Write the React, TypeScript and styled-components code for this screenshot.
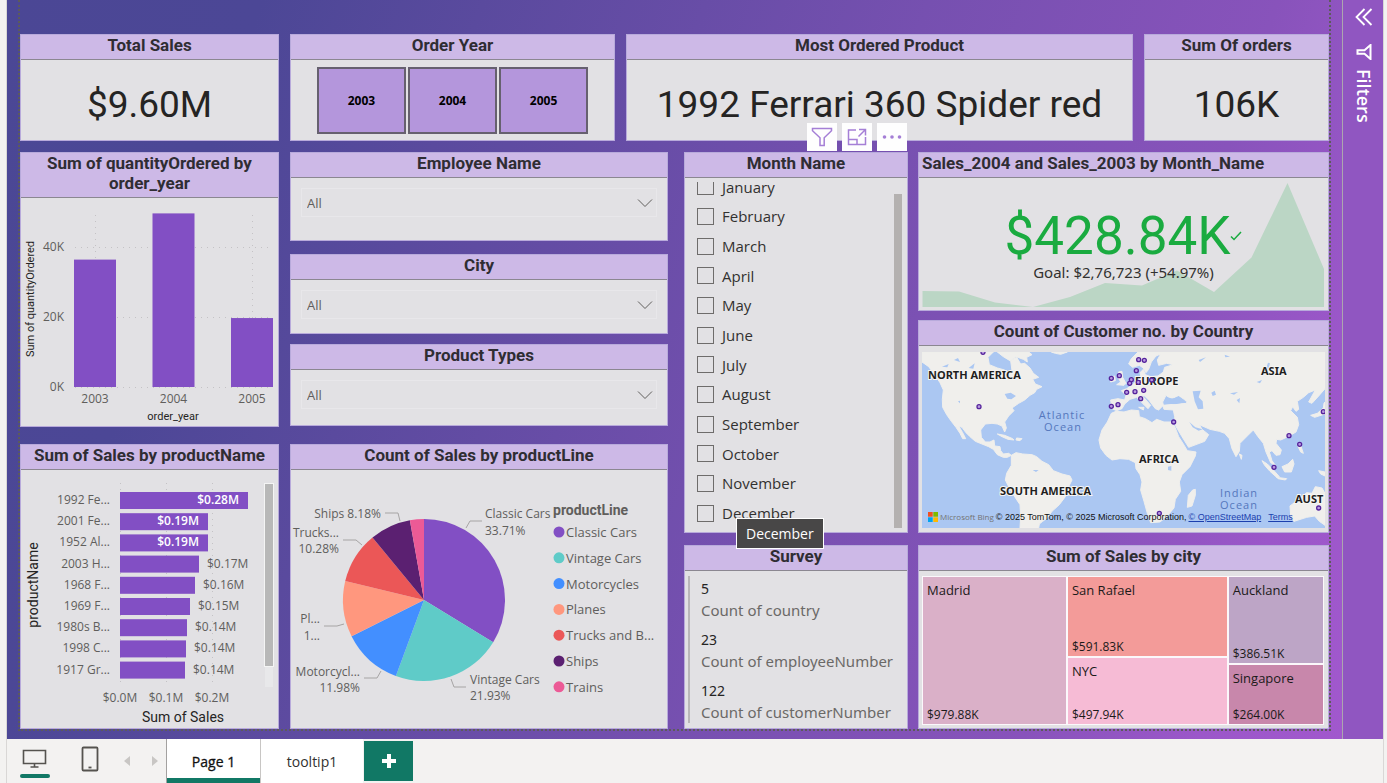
import React from "react";
import styled, { createGlobalStyle } from "styled-components";

const din = `Roboto, "Liberation Sans", sans-serif`;
const segoe = `"Open Sans", "Noto Sans", sans-serif`;
const wide = `"Noto Sans", "Open Sans", sans-serif`;

const GlobalStyle = createGlobalStyle`
  *, *::before, *::after { box-sizing: border-box; }
  body { margin: 0; background: #f3f2f1; font-family: ${segoe}; color: #252423; }
  button, select, input { font: inherit; }
`;

/* ---------- shell ---------- */

const Shell = styled.div`
  min-height: 100vh;
  display: flex;
  flex-direction: column;
  padding: 0 3px 0 6px;
`;

const Workspace = styled.div`
  flex: 1;
  display: flex;
  border-left: 1px solid #d9d7d6;
  border-right: 1px solid #d9d7d6;
`;

const Canvas = styled.main`
  flex: 1;
  min-width: 0;
  padding: 0 11px 8px;
  background: linear-gradient(109deg, #4b4795 0%, #4c4796 16%, #5a4a9e 30%, #7650b0 58%, #8853bb 80%, #9b57c9 91%, #a158cd 100%);
`;

const ReportFrame = styled.div`
  display: flex;
  flex-direction: column;
  gap: 11px;
  height: 100%;
  padding-top: 34px;
  border: 2px dotted #5d5b5a;
  border-top: 0;
`;

const TopRow = styled.div`
  display: grid;
  grid-template-columns: 259fr 325fr 507fr 185fr;
  gap: 11px;
`;

const Board = styled.div`
  flex: 1;
  display: grid;
  grid-template-columns: 648fr 645fr;
  gap: 16px;
`;

const Half = styled.div<{ $columns: string; $gap: number }>`
  display: grid;
  grid-template-columns: ${(p) => p.$columns};
  gap: ${(p) => p.$gap}px;
  min-width: 0;
`;

const Stack = styled.div<{ $gap: number }>`
  display: flex;
  flex-direction: column;
  gap: ${(p) => p.$gap}px;
  min-width: 0;
`;

/* ---------- cards ---------- */

const Card = styled.section<{ $grow?: boolean }>`
  position: relative;
  display: flex;
  flex-direction: column;
  flex-grow: ${(p) => (p.$grow ? 1 : 0)};
  min-width: 0;
  border: 1px solid #b8aadb;
  background: #e2e1e4;
`;

const CardTitle = styled.h2<{ $align?: string }>`
  margin: 0;
  padding: 0 3px 4px;
  border-bottom: 1px solid #8b8791;
  background: #cdb9e7;
  color: #2f2d33;
  font: 700 17px/20px ${din};
  text-align: ${(p) => p.$align ?? "center"};
`;

const CardBody = styled.div<{ $height: number }>`
  position: relative;
  min-height: ${(p) => p.$height}px;
  flex: 1;
  display: flex;
  align-items: center;
  justify-content: center;
`;

const Chart = styled.svg`
  display: block;
  width: 100%;
  font-family: ${segoe};
`;

const BigNumber = styled.p`
  margin: 0;
  padding-top: 10px;
  color: #252423;
  font: 400 37px/40px ${din};
  white-space: nowrap;
`;

/* ---------- year tiles ---------- */

const YearTiles = styled.div`
  width: 84%;
  height: 67px;
  display: grid;
  grid-template-columns: repeat(3, 1fr);
  gap: 2px;
`;

const YearTile = styled.button`
  border: 2px solid #66606f;
  background: #b496dc;
  color: #000;
  font-size: 12px;
  font-weight: 700;
  padding: 0;
`;

/* ---------- drop-down slicers ---------- */

const Dropdown = styled.div`
  position: relative;
  width: calc(100% - 20px);
`;

const DropdownSelect = styled.select`
  display: block;
  width: 100%;
  height: 29px;
  padding: 0 5px;
  appearance: none;
  border: 1px solid #e8e7ea;
  border-radius: 0;
  background: transparent;
  color: #605e5c;
  font-size: 13px;
`;

const DropdownArrow = styled.svg`
  position: absolute;
  right: 4px;
  top: 10px;
  pointer-events: none;
`;

const SlicerBody = styled(CardBody)`
  align-items: flex-start;
  padding-top: 10px;
`;

function SlicerCard({ id, title, height }: { id: string; title: string; height: number }) {
  return (
    <Card>
      <CardTitle>
        <label htmlFor={id}>{title}</label>
      </CardTitle>
      <SlicerBody $height={height}>
        <Dropdown>
          <DropdownSelect id={id} defaultValue="All">
            <option>All</option>
          </DropdownSelect>
          <DropdownArrow width="16" height="10" viewBox="0 0 16 10" fill="none" stroke="#605e5c">
            <path d="M1 1.5 8 8.5 15 1.5" />
          </DropdownArrow>
        </Dropdown>
      </SlicerBody>
    </Card>
  );
}

/* ---------- month list ---------- */

const MonthScroller = styled.div`
  flex: 1;
  align-self: stretch;
  display: flex;
  margin: 4px 5px 4px 12px;
`;

const MonthClip = styled.div`
  flex: 1;
  height: 346px;
  display: flex;
  flex-direction: column;
  justify-content: flex-end;
  overflow: hidden;
`;

const MonthList = styled.ul`
  flex: none;
  height: 356px;
  display: grid;
  grid-auto-rows: 1fr;
  align-items: center;
  margin: 0;
  padding: 0;
  list-style: none;
`;

const MonthLabel = styled.label`
  display: flex;
  align-items: center;
  gap: 8px;
  color: #323130;
  font-size: 15px;
  line-height: 20px;
`;

const MonthBox = styled.input`
  appearance: none;
  width: 17px;
  height: 17px;
  margin: 0;
  border: 1px solid #6e6c6b;
  background: transparent;
`;

const MonthScrollbar = styled.div`
  width: 8px;
  margin-top: 12px;
  background: #b4b1b0;
`;

const Tooltip = styled.div`
  position: absolute;
  z-index: 3;
  left: 51px;
  bottom: -17px;
  padding: 4px 9px;
  border: 1px solid #fff;
  background: #484747;
  color: #fff;
  font-size: 14px;
  line-height: 21px;
`;

const HeaderTools = styled.div`
  position: absolute;
  z-index: 2;
  right: 0;
  bottom: calc(100% + 2px);
  display: flex;
  gap: 5px;
`;

const ToolButton = styled.button`
  width: 30px;
  height: 28px;
  display: grid;
  place-items: center;
  padding: 0;
  border: 0;
  background: #fefefe;
`;

/* ---------- survey ---------- */

const SurveyList = styled.dl`
  flex: 1;
  align-self: stretch;
  display: flex;
  flex-direction: column;
  gap: 8px;
  margin: 5px 4px 5px 3px;
  padding: 2px 0 0 11px;
  border-left: 2px solid #b9b7b9;
  font-family: ${wide};
  font-size: 15px;
  line-height: 22px;
  white-space: nowrap;
`;

const SurveyItem = styled.div`
  display: flex;
  flex-direction: column-reverse;
`;

const SurveyName = styled.dt`
  color: #6b6967;
`;

const SurveyValue = styled.dd`
  margin: 0;
  color: #252423;
  font-size: 14px;
  line-height: 21px;
`;

/* ---------- KPI ---------- */

const KpiTrend = styled.svg`
  position: absolute;
  inset: 0;
  width: 100%;
  height: 100%;
`;

const KpiText = styled.div`
  position: relative;
  text-align: center;
  padding-top: 4px;
`;

const KpiValue = styled.p`
  display: flex;
  align-items: center;
  justify-content: center;
  margin: 0;
  color: #1aab40;
  font: 400 53px/52px ${din};
`;

const KpiGoal = styled.p`
  margin: 0;
  color: #323130;
  font-family: ${wide};
  font-size: 15px;
  line-height: 20px;
`;

/* ---------- map ---------- */

const MapFrame = styled.div`
  position: relative;
  width: 100%;
  margin: 6px 3px 4px;
  overflow: hidden;
`;

const MapCredit = styled.div`
  position: absolute;
  left: 6px;
  right: 4px;
  bottom: 4px;
  display: flex;
  align-items: center;
  gap: 2px;
  color: #111;
  font: 400 9px/14px "Liberation Sans", sans-serif;
  white-space: nowrap;
`;

const BingName = styled.span`
  color: #737373;
  font-family: ${segoe};
  font-size: 8px;
`;

const MapLink = styled.a`
  color: #1b3fae;
  margin-right: 5px;
`;

/* ---------- treemap ---------- */

const Treemap = styled.div`
  flex: 1;
  align-self: stretch;
  display: grid;
  grid-template-columns: 144fr 160fr 95fr;
  gap: 2px;
  margin: 5px 4px 3px 3px;
  padding: 1px;
  background: #fbf8fb;
`;

const TreemapColumn = styled.div<{ $rows: string }>`
  display: grid;
  grid-template-rows: ${(p) => p.$rows};
  gap: 2px;
`;

const Tile = styled.div<{ $color: string }>`
  display: flex;
  flex-direction: column;
  justify-content: space-between;
  padding: 4px 4px 0;
  background: ${(p) => p.$color};
  color: #1b1a19;
  font-size: 13px;
  line-height: 18px;
`;

const TileValue = styled.span`
  font-size: 12px;
`;

/* ---------- filters pane ---------- */

const FiltersPane = styled.aside`
  flex: none;
  width: 41px;
  display: flex;
  flex-direction: column;
  align-items: center;
  gap: 18px;
  padding: 8px 0 0 2px;
  border-left: 1px solid #aca6ae;
  background: #9056c1;
`;

const PaneButton = styled.button`
  display: grid;
  padding: 0;
  border: 0;
  background: none;
  color: #fff;
`;

const PaneTitle = styled.h2`
  display: flex;
  align-items: center;
  gap: 9px;
  margin: 0;
  color: #fff;
  font-size: 18px;
  font-weight: 600;
  line-height: 20px;
  writing-mode: vertical-rl;
`;

/* ---------- page tabs ---------- */

const TabBar = styled.footer`
  display: flex;
  height: 44px;
  border-left: 1px solid #d9d7d6;
  border-right: 1px solid #d9d7d6;
`;

const DeviceButton = styled.button<{ $active?: boolean }>`
  width: 30px;
  height: 39px;
  margin: 0 0 0 ${(p) => (p.$active ? 13 : 25)}px;
  padding: 0;
  display: flex;
  flex-direction: column;
  align-items: center;
  justify-content: center;
  border: 0;
  background: none;
  position: relative;

  &::after {
    content: "";
    position: absolute;
    inset: auto 0 0;
    height: 4px;
    border-radius: 2px;
    background: ${(p) => (p.$active ? "#117865" : "transparent")};
  }
`;

const PageArrows = styled.div`
  display: flex;
  align-items: center;
  gap: 20px;
  margin: 0 7px 0 18px;
`;

const ArrowButton = styled.button`
  display: grid;
  padding: 0;
  border: 0;
  background: none;
`;

const Tab = styled.button<{ $active?: boolean; $width: number }>`
  width: ${(p) => p.$width}px;
  padding: 0;
  border: 0;
  border-left: 1px solid ${(p) => (p.$active ? "#a3a1a0" : "#c8c6c4")};
  box-shadow: inset 0 ${(p) => (p.$active ? -5 : 0)}px 0 #117865;
  background: #fff;
  color: ${(p) => (p.$active ? "#111" : "#323130")};
  font-size: 14px;
  -webkit-text-stroke: ${(p) => (p.$active ? "0.3px" : "0")};
`;

const AddPage = styled.button`
  display: grid;
  place-items: center;
  width: 49px;
  height: 40px;
  margin: 2px 0 0 1px;
  padding: 0;
  border: 0;
  background: #117865;
`;

/* ---------- column chart ---------- */

const quantityByYear = [
  { year: "2003", value: 36.4 },
  { year: "2004", value: 49.6 },
  { year: "2005", value: 19.7 },
];

function QuantityChart() {
  const base = 189;
  const perK = 3.5;
  return (
    <Chart height="228" viewBox="0 0 257 228" fontSize="12" fill="#605e5c">
      <g stroke="#c4c2c5" strokeDasharray="1 5">
        {[0, 20, 40].map((k) => (
          <line key={k} x1="54" x2="252" y1={base - k * perK + 0.5} y2={base - k * perK + 0.5} />
        ))}
        {[74.5, 231.5].map((x) => (
          <line key={x} x1={x} x2={x} y1="17" y2={base} />
        ))}
      </g>
      {[0, 20, 40].map((k) => (
        <text key={k} x="43" y={base - k * perK + 4} textAnchor="end">
          {k}K
        </text>
      ))}
      {quantityByYear.map((d, i) => {
        const cx = 74 + i * 78.5;
        return (
          <g key={d.year}>
            <rect x={cx - 21} y={base - d.value * perK} width="42" height={d.value * perK} fill="#824fc4" />
            <text x={cx} y="205" textAnchor="middle">
              {d.year}
            </text>
          </g>
        );
      })}
      <g fill="#252423" fontFamily={din} fontSize="11" textAnchor="middle">
        <text x="152" y="222">order_year</text>
        <text transform="translate(13 101) rotate(-90)">Sum of quantityOrdered</text>
      </g>
    </Chart>
  );
}

/* ---------- bar chart ---------- */

const salesByProduct = [
  { name: "1992 Fe...", width: 128, label: "$0.28M" },
  { name: "2001 Fe...", width: 88, label: "$0.19M" },
  { name: "1952 Al...", width: 88, label: "$0.19M" },
  { name: "2003 H...", width: 79, label: "$0.17M" },
  { name: "1968 F...", width: 75, label: "$0.16M" },
  { name: "1969 F...", width: 70, label: "$0.15M" },
  { name: "1980s B...", width: 67, label: "$0.14M" },
  { name: "1998 C...", width: 66, label: "$0.14M" },
  { name: "1917 Gr...", width: 65, label: "$0.14M" },
];

function ProductChart() {
  const left = 99;
  return (
    <Chart height="258" viewBox="0 0 257 258" fontSize="12" fill="#605e5c">
      <g stroke="#c4c2c5" strokeDasharray="1 5">
        {[0, 46, 92].map((x) => (
          <line key={x} x1={left + x + 0.5} x2={left + x + 0.5} y1="13" y2="217" />
        ))}
      </g>
      {salesByProduct.map((d, i) => {
        const cy = 30 + i * 21.2;
        const inside = i < 3;
        return (
          <g key={d.name}>
            <text x="89" y={cy + 4} textAnchor="end">
              {d.name}
            </text>
            <rect x={left} y={cy - 8} width={d.width} height="17" fill="#824fc4" />
            <text
              x={left + d.width + (inside ? -9 : 8)}
              y={cy + 4}
              textAnchor={inside ? "end" : "start"}
              fill={inside ? "#fff" : undefined}
              fontWeight={inside ? 600 : 400}
            >
              {d.label}
            </text>
          </g>
        );
      })}
      <g textAnchor="middle">
        {["$0.0M", "$0.1M", "$0.2M"].map((t, i) => (
          <text key={t} x={left + i * 46} y="232">
            {t}
          </text>
        ))}
      </g>
      <g fill="#252423" fontFamily={din} fontSize="14" textAnchor="middle">
        <text x="162" y="252">Sum of Sales</text>
        <text transform="translate(17 115) rotate(-90)">productName</text>
      </g>
      <rect x="244" y="13" width="8" height="204" fill="#e8e8ea" />
      <rect x="243.500" y="13.500" width="9" height="183" fill="#b8b8b8" stroke="#f4f4f4" />
    </Chart>
  );
}

/* ---------- pie chart ---------- */

const productLines = [
  { name: "Classic Cars", share: 33.71, color: "#824fc4" },
  { name: "Vintage Cars", share: 21.93, color: "#5fcbc8" },
  { name: "Motorcycles", share: 11.98, color: "#438fff" },
  { name: "Planes", share: 11.13, color: "#ff977e" },
  { name: "Trucks and B...", share: 10.28, color: "#eb5757" },
  { name: "Ships", share: 8.18, color: "#5b2071" },
  { name: "Trains", share: 2.79, color: "#ec5a96" },
];

function PieChart() {
  const cx = 133;
  const cy = 130;
  const r = 81;
  let total = 0;
  const point = (share: number) => {
    const a = (share / 100) * Math.PI * 2;
    return `${(cx + r * Math.sin(a)).toFixed(2)} ${(cy - r * Math.cos(a)).toFixed(2)}`;
  };
  return (
    <Chart height="258" viewBox="0 0 376 258" fontSize="12" fill="#605e5c">
      {productLines.map((d) => {
        const from = total;
        total += d.share;
        return <path key={d.name} d={`M${cx} ${cy}L${point(from)}A${r} ${r} 0 0 1 ${point(total)}Z`} fill={d.color} />;
      })}
      <g fill="none" stroke="#a6a4a4">
        <path d="M175 58l4-7h12" />
        <path d="M94 43h13l2 8" />
        <path d="M52 70h13l6 5" />
        <path d="M33 156h13l7-2" />
        <path d="M73 208h13l4-7" />
        <path d="M160 209l3 8h12" />
      </g>
      <text x="194" y="48">Classic Cars</text>
      <text x="194" y="65">33.71%</text>
      <text x="179" y="214">Vintage Cars</text>
      <text x="179" y="230">21.93%</text>
      <g textAnchor="end">
        <text x="90" y="48">Ships 8.18%</text>
        <text x="48" y="67">Trucks...</text>
        <text x="48" y="83">10.28%</text>
        <text x="29" y="153">Pl...</text>
        <text x="29" y="170">1...</text>
        <text x="69" y="206">Motorcycl...</text>
        <text x="69" y="222">11.98%</text>
      </g>
      <text x="262" y="45" fontFamily={din} fontSize="14" fontWeight="700">productLine</text>
      <g fontSize="13">
        {productLines.map((d, i) => (
          <g key={d.name}>
            <circle cx="268" cy={62 + i * 25.8} r="5.500" fill={d.color} />
            <text x="275" y={67 + i * 25.8}>{d.name}</text>
          </g>
        ))}
      </g>
    </Chart>
  );
}

/* ---------- map ---------- */

const land = [
  "M36 66L56 80 74 104 90 128 100 150 97 178 98 202 110 224 124 244 138 262 150 280 158 296 167 296 158 278 146 258 156 262 168 278 180 290 196 304 216 312 236 320 250 328 262 344 280 352 292 352 304 346 296 340 280 342 272 332 270 320 254 318 252 300 240 306 226 306 214 292 212 270 226 252 246 250 262 252 276 258 284 276 289 264 284 246 296 228 312 212 306 204 326 190 344 180 360 166 374 158 380 148 396 140 376 132 368 118 386 112 370 100 360 84 344 70 332 72 320 52 302 62 306 92 292 108 284 90 262 84 238 74 234 52 250 36H36Z",
  "M262 36L280 50 300 62 318 50 340 58 352 66 350 52 366 44 356 36Z",
  "M262 282L284 286 308 296 312 300 294 298 276 290Z",
  "M320 294L336 296 330 302 318 300Z",
  "M424 36H472L452 43 436 40Z",
  "M304 346L318 338 338 342 366 344 380 350 396 364 416 374 430 392 456 402 480 408 486 420 474 444 466 470 448 494 426 514 412 534 398 544 388 552 386 564H330L332 530 330 494 314 470 298 444 286 420 290 400 304 376Z",
  "M604 220L618 214 642 216 664 210 686 212 688 230 706 236 726 248 740 238 762 246 786 246 796 264 806 290 820 312 832 332 858 336 856 348 840 380 816 404 808 426 812 454 796 478 792 504 770 530 750 546 722 548 712 520 702 484 692 450 696 426 690 404 678 386 676 368 656 358 630 356 606 360 588 346 572 324 567 300 576 270 592 246Z",
  "M832 502L835 466 848 450 856 448 856 466 846 498Z",
  "M606 206L602 180 624 176 644 180 648 166 634 152 650 146 666 136 680 122 694 116 690 98 700 88 706 104 722 110 744 108 760 96 764 82 790 74 770 70 746 76 742 60 752 42 738 48 724 66 716 88 708 98 700 84 688 76 668 82 656 72 664 56 684 36H1245V146L1226 168 1206 190 1196 186 1216 150 1196 158 1180 172 1162 184 1166 208 1158 214 1148 200 1142 212 1162 232 1166 254 1158 276 1134 290 1112 300 1100 298 1098 310 1114 330 1110 344 1098 346 1086 332 1078 336 1086 362 1096 376 1082 368 1068 336 1060 310 1044 290 1030 270 1014 286 990 310 988 334 978 350 966 326 958 296 944 280 928 274 900 268 868 254 876 268 896 284 884 304 836 322 816 290 796 256 794 230 790 210 762 208 758 196 800 192 832 190 822 178 806 168 782 176 768 166 758 186 760 196 746 210 736 206 718 182 704 168 694 164 722 196 714 206 700 192 680 172 660 178 644 192 636 206 620 212Z",
  "M620 134L632 126 624 112 626 96 636 94 638 112 648 130 642 136Z",
  "M602 126L602 112 614 108 616 122Z",
  "M686 202L702 202 700 210Z",
  "M1056 362L1072 372 1092 392 1108 410 1100 412 1080 394 1064 376Z",
  "M1100 412L1130 416 1126 420 1104 416Z",
  "M1116 380L1134 372 1148 358 1152 372 1144 396 1124 396Z",
  "M1162 314L1172 316 1180 340 1172 336Z",
  "M1226 392L1245 396V408L1232 402Z",
  "M1202 226L1222 220 1240 204 1242 190 1245 186V222L1214 232Z",
  "M988 342L996 346 994 358Z",
  "M1140 498L1164 480 1190 458 1206 460 1216 440 1236 444 1245 460V556L1228 544 1214 528 1190 532 1152 544 1142 526Z",
];

const inlandWater = [
  "M848 154L872 152 866 172 878 184 880 206 864 208 854 184Z",
  "M770 172L790 176 806 168 830 186 800 192 764 192Z",
  "M838 246L856 262 878 268 866 272 848 262Z",
  "M284 162L302 158 318 168 304 178 292 176Z",
  "M774 380L784 378 784 392 774 390Z",
  "M904 158L914 152 918 164 908 168Z",
  "M1066 92L1074 68 1080 70 1074 92Z",
  "M144 184L150 182 150 190Z",
  "M368 390L386 390 378 396Z",
  "M96 80L116 72 112 82ZM132 60L150 66 144 54ZM176 84L194 70 190 86Z",
  "M960 160L984 156 972 164ZM980 180L990 174 988 190ZM1040 126L1056 120 1050 130Z",
  "M866 60L888 52 870 66ZM944 44L960 50 946 52Z",
];

const customers = [
  [219, 37], [207, 200], [604, 115], [628, 107], [686, 59], [703, 61], [679, 92], [664, 119], [659, 130],
  [685, 127], [725, 120], [650, 157], [675, 155], [701, 151], [692, 176], [604, 199], [624, 194], [791, 246],
  [1240, 215], [1137, 287], [1169, 313], [1092, 382], [1226, 504], [748, 520],
];

function CustomerMap() {
  return (
    <MapFrame>
      <Chart height="176" viewBox="0 0 403 176" preserveAspectRatio="xMidYMid slice">
        <rect width="403" height="176" fill="#abc7f2" />
        <g transform="translate(-12 -12) scale(0.33333)">
          <path d={land.join("")} fill="#f0efec" stroke="#f0efec" strokeWidth="3" strokeLinejoin="round" />
          <path d={inlandWater.join("")} fill="#abc7f2" />
        </g>
        <g
          fill="#1f1f1f"
          stroke="#f6f5f3"
          strokeWidth="2"
          paintOrder="stroke"
          fontFamily={wide}
          fontSize="11"
          fontWeight="700"
        >
          <text x="6" y="27">NORTH AMERICA</text>
          <text x="213" y="33">EUROPE</text>
          <text x="339" y="23">ASIA</text>
          <text x="217" y="111">AFRICA</text>
          <text x="78" y="143">SOUTH AMERICA</text>
          <text x="373" y="151">AUST</text>
        </g>
        <g fill="#5577bd" fontSize="11" textAnchor="middle" letterSpacing="1">
          <text x="140" y="67">Atlantic</text>
          <text x="141" y="79">Ocean</text>
          <text x="317" y="145">Indian</text>
          <text x="317" y="157">Ocean</text>
        </g>
        <g fill="#b99be0" stroke="#55239c" strokeWidth="1.300">
          {customers.map(([x, y]) => (
            <circle key={`${x}-${y}`} cx={x / 3 - 12} cy={y / 3 - 12} r="2" />
          ))}
        </g>
      </Chart>
      <MapCredit>
        <svg width="10" height="10" viewBox="0 0 10 10">
          <path fill="#f25022" d="M0 0h4.700v4.700H0z" />
          <path fill="#7fba00" d="M5.300 0H10v4.700H5.300z" />
          <path fill="#00a4ef" d="M0 5.300h4.700V10H0z" />
          <path fill="#ffb900" d="M5.300 5.300H10V10H5.300z" />
        </svg>
        <BingName>Microsoft Bing</BingName>
        <span>© 2025 TomTom, © 2025 Microsoft Corporation,</span>
        <MapLink href="#osm">© OpenStreetMap</MapLink>
        <MapLink href="#terms">Terms</MapLink>
      </MapCredit>
    </MapFrame>
  );
}

/* ---------- page ---------- */

const months = [
  "January", "February", "March", "April", "May", "June",
  "July", "August", "September", "October", "November", "December",
];

const survey = [
  { value: "5", name: "Count of country" },
  { value: "23", name: "Count of employeeNumber" },
  { value: "122", name: "Count of customerNumber" },
];

function CityTile({ name, value, color }: { name: string; value: string; color: string }) {
  return (
    <Tile $color={color}>
      <span>{name}</span>
      <TileValue>{value}</TileValue>
    </Tile>
  );
}

export default function App() {
  return (
    <Shell>
      <GlobalStyle />
      <Workspace>
        <Canvas>
          <ReportFrame>
            <TopRow>
              <Card>
                <CardTitle>Total Sales</CardTitle>
                <CardBody $height={80}>
                  <BigNumber>$9.60M</BigNumber>
                </CardBody>
              </Card>
              <Card>
                <CardTitle>Order Year</CardTitle>
                <CardBody $height={80}>
                  <YearTiles>
                    <YearTile>2003</YearTile>
                    <YearTile>2004</YearTile>
                    <YearTile>2005</YearTile>
                  </YearTiles>
                </CardBody>
              </Card>
              <Card>
                <CardTitle>Most Ordered Product</CardTitle>
                <CardBody $height={80}>
                  <BigNumber>1992 Ferrari 360 Spider red</BigNumber>
                </CardBody>
              </Card>
              <Card>
                <CardTitle>Sum Of orders</CardTitle>
                <CardBody $height={80}>
                  <BigNumber>106K</BigNumber>
                </CardBody>
              </Card>
            </TopRow>

            <Board>
              <Half $columns="259fr 378fr" $gap={11}>
                <Stack $gap={17}>
                  <Card>
                    <CardTitle>
                      Sum of quantityOrdered by
                      <br />
                      order_year
                    </CardTitle>
                    <CardBody $height={228}>
                      <QuantityChart />
                    </CardBody>
                  </Card>
                  <Card $grow>
                    <CardTitle>Sum of Sales by productName</CardTitle>
                    <CardBody $height={258}>
                      <ProductChart />
                    </CardBody>
                  </Card>
                </Stack>
                <Stack $gap={18}>
                  <Stack $gap={13}>
                    <SlicerCard id="employee" title="Employee Name" height={62} />
                    <Stack $gap={10}>
                      <SlicerCard id="city" title="City" height={53} />
                      <SlicerCard id="product-type" title="Product Types" height={55} />
                    </Stack>
                  </Stack>
                  <Card $grow>
                    <CardTitle>Count of Sales by productLine</CardTitle>
                    <CardBody $height={258}>
                      <PieChart />
                    </CardBody>
                  </Card>
                </Stack>
              </Half>

              <Half $columns="224fr 411fr" $gap={10}>
                <Stack $gap={12}>
                  <Card>
                    <HeaderTools>
                      <ToolButton aria-label="Filters on this visual">
                        <svg width="22" height="20" viewBox="0 0 22 20" fill="none" stroke="#a57fd6" strokeWidth="1.500">
                          <path d="M1.500 1.500h19v2.200l-7.300 7.100v7.700H9v-7.700L1.500 3.700z" />
                        </svg>
                      </ToolButton>
                      <ToolButton aria-label="Focus mode">
                        <svg width="20" height="18" viewBox="0 0 20 18" fill="none" stroke="#a57fd6" strokeWidth="1.500">
                          <path d="M9 2H1.500v14.500h17V9" />
                          <path d="M1.500 11.500H10v5M12 1.500h6.500v6M18.500 1.500l-7 7" />
                        </svg>
                      </ToolButton>
                      <ToolButton aria-label="More options">
                        <svg width="20" height="4" viewBox="0 0 20 4" fill="#a57fd6">
                          <circle cx="2.500" cy="2" r="1.800" />
                          <circle cx="10" cy="2" r="1.800" />
                          <circle cx="17.500" cy="2" r="1.800" />
                        </svg>
                      </ToolButton>
                    </HeaderTools>
                    <CardTitle>Month Name</CardTitle>
                    <CardBody $height={354}>
                      <MonthScroller>
                        <MonthClip>
                          <MonthList>
                            {months.map((m) => (
                              <li key={m}>
                                <MonthLabel>
                                  <MonthBox type="checkbox" />
                                  {m}
                                </MonthLabel>
                              </li>
                            ))}
                          </MonthList>
                        </MonthClip>
                        <MonthScrollbar />
                      </MonthScroller>
                    </CardBody>
                    <Tooltip role="tooltip">December</Tooltip>
                  </Card>
                  <Card $grow>
                    <CardTitle>Survey</CardTitle>
                    <CardBody $height={157}>
                      <SurveyList>
                        {survey.map((s) => (
                          <SurveyItem key={s.name}>
                            <SurveyName>{s.name}</SurveyName>
                            <SurveyValue>{s.value}</SurveyValue>
                          </SurveyItem>
                        ))}
                      </SurveyList>
                    </CardBody>
                  </Card>
                </Stack>

                <Stack $gap={12}>
                  <Stack $gap={9}>
                    <Card>
                      <CardTitle $align="left">Sales_2004 and Sales_2003 by Month_Name</CardTitle>
                      <CardBody $height={132}>
                        <KpiTrend viewBox="0 0 409 132" preserveAspectRatio="none">
                          <path
                            fill="#bbd6c5"
                            d="M3.500 113 40 113.500 76 124.500 114 129 151 119 186 105 223 107.500 258 92.500 295 114 332.500 79.500 368.500 5 405 91V129H3.500Z"
                          />
                        </KpiTrend>
                        <KpiText>
                          <KpiValue>
                            $428.84K
                            <svg width="12" height="10" viewBox="0 0 12 10" fill="none" stroke="#1aab40" strokeWidth="1.500">
                              <path d="M1 5.500 4 8.500 11 1" />
                            </svg>
                          </KpiValue>
                          <KpiGoal>Goal: $2,76,723 (+54.97%)</KpiGoal>
                        </KpiText>
                      </CardBody>
                    </Card>
                    <Card>
                      <CardTitle>Count of Customer no. by Country</CardTitle>
                      <CardBody $height={186}>
                        <CustomerMap />
                      </CardBody>
                    </Card>
                  </Stack>
                  <Card $grow>
                    <CardTitle>Sum of Sales by city</CardTitle>
                    <CardBody $height={157}>
                      <Treemap>
                        <CityTile name="Madrid" value="$979.88K" color="#dab0c8" />
                        <TreemapColumn $rows="80fr 66fr">
                          <CityTile name="San Rafael" value="$591.83K" color="#f39b99" />
                          <CityTile name="NYC" value="$497.94K" color="#f6bbd5" />
                        </TreemapColumn>
                        <TreemapColumn $rows="87fr 59fr">
                          <CityTile name="Auckland" value="$386.51K" color="#bda5c6" />
                          <CityTile name="Singapore" value="$264.00K" color="#c887ab" />
                        </TreemapColumn>
                      </Treemap>
                    </CardBody>
                  </Card>
                </Stack>
              </Half>
            </Board>
          </ReportFrame>
        </Canvas>

        <FiltersPane>
          <PaneButton aria-label="Expand filters">
            <svg width="18" height="18" viewBox="0 0 18 18" fill="none" stroke="#fff" strokeWidth="1.800">
              <path d="M9.500 1 1.500 9l8 8M16.500 1l-8 8 8 8" />
            </svg>
          </PaneButton>
          <PaneTitle>
            <svg width="16" height="16" viewBox="0 0 16 16" fill="none" stroke="#fff" strokeWidth="2">
              <path d="M14.500 1v14L8.500 9.700H1.500V6.300h7z" />
            </svg>
            Filters
          </PaneTitle>
        </FiltersPane>
      </Workspace>

      <TabBar>
        <DeviceButton $active aria-label="Desktop layout">
          <svg width="26" height="20" viewBox="0 0 26 20" fill="none" stroke="#55534f" strokeWidth="1.600">
            <path d="M1.500 1.500h22v13h-22zM12.500 14.500v3M8.500 18h8" />
          </svg>
        </DeviceButton>
        <DeviceButton aria-label="Mobile layout">
          <svg width="18" height="26" viewBox="0 0 18 26" fill="none" stroke="#55534f" strokeWidth="1.800">
            <rect x="1.500" y="1.500" width="15" height="23" rx="1" />
            <path d="M7.500 21.500h3" />
          </svg>
        </DeviceButton>
        <PageArrows>
          <ArrowButton aria-label="Previous page">
            <svg width="8" height="10" viewBox="0 0 8 10" fill="#c8c6c4">
              <path d="M7 0v10L1 5z" />
            </svg>
          </ArrowButton>
          <ArrowButton aria-label="Next page">
            <svg width="8" height="10" viewBox="0 0 8 10" fill="#c8c6c4">
              <path d="M1 0v10l6-5z" />
            </svg>
          </ArrowButton>
        </PageArrows>
        <Tab $active $width={94}>Page 1</Tab>
        <Tab $width={103}>tooltip1</Tab>
        <AddPage aria-label="New page">
          <svg width="14" height="14" viewBox="0 0 14 14" stroke="#fff" strokeWidth="4">
            <path d="M7 0v14M0 7h14" />
          </svg>
        </AddPage>
      </TabBar>
    </Shell>
  );
}
